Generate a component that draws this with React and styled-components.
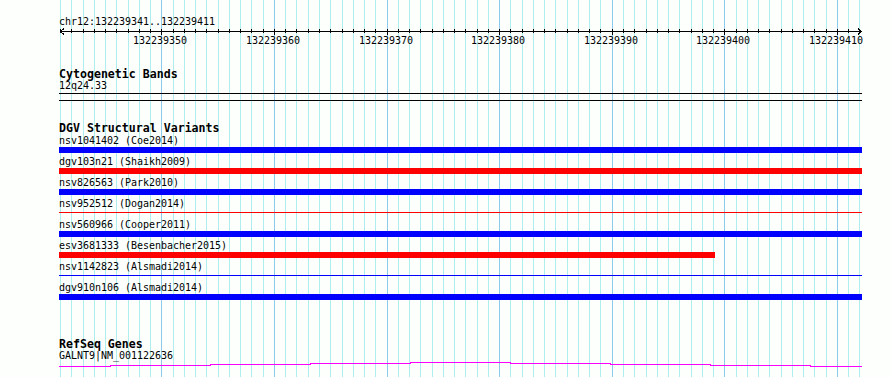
import React from 'react';
import styled, { createGlobalStyle } from 'styled-components';

const START = 132239341;
const END = 132239412;
const LEFT = 59;
const PX_PER_BASE = 11.26;

// x of a base on the page
const baseX = (base) => Math.round(60 + (base - START) * PX_PER_BASE);

const variants = [
  { id: 'nsv1041402', study: 'Coe2014', color: '#0000ff' },
  { id: 'dgv103n21', study: 'Shaikh2009', color: '#ff0000' },
  { id: 'nsv826563', study: 'Park2010', color: '#0000ff' },
  { id: 'nsv952512', study: 'Dogan2014', color: '#ff0000', thin: true },
  { id: 'nsv560966', study: 'Cooper2011', color: '#0000ff' },
  { id: 'esv3681333', study: 'Besenbacher2015', color: '#ff0000', end: 715 },
  { id: 'nsv1142823', study: 'Alsmadi2014', color: '#0000ff', thin: true },
  { id: 'dgv910n106', study: 'Alsmadi2014', color: '#0000ff' },
];

// gene model drawn as a shallow arc, stepping 1px every 100px
const geneSteps = [
  [59, 110, 366], [110, 210, 365], [210, 310, 364], [310, 410, 363], [410, 510, 362],
  [510, 610, 363], [610, 710, 364], [710, 810, 365], [810, 862, 366],
];

const bases = [];
for (let b = START; b <= END; b++) bases.push(b);
const majors = bases.filter((b) => b % 10 === 0);

function App() {
  return (
    <>
      <GlobalStyle />
      <Canvas>
        <GridLayer width="890" height="377">
          {bases.map((b) => (
            <line
              key={b}
              x1={baseX(b) + 0.5}
              x2={baseX(b) + 0.5}
              y1="0"
              y2="377"
              stroke={b % 10 === 0 ? '#8ccbec' : '#aeeeee'}
              strokeWidth="1"
            />
          ))}
        </GridLayer>

        <Tracks>
          <Label>chr12:132239341..132239411</Label>
          <RulerSvg width="803" height="7" shapeRendering="crispEdges">
            <line x1="1" x2="803" y1="3.5" y2="3.5" stroke="#000" />
            {bases.slice(0, 72).map((b) => {
              const x = baseX(b) - LEFT + 0.5;
              return <line key={b} x1={x} x2={x} y1="1" y2={b % 10 === 0 ? 7 : 5} stroke="#000" />;
            })}
            <polyline points="5,0.5 1.5,3.5 5,6.5" fill="none" stroke="#000" />
            <polyline points="799,0.5 802.5,3.5 799,6.5" fill="none" stroke="#000" />
          </RulerSvg>
          <TickRow>
            {majors.map((b) => (
              <TickLabel key={b} style={{ left: baseX(b) - LEFT - 28 }}>{b}</TickLabel>
            ))}
          </TickRow>

          <Track $gap={21}>
            <Title>Cytogenetic Bands</Title>
            <Label>12q24.33</Label>
            <BandBox />
          </Track>

          <Track $gap={21}>
            <Title $tight>DGV Structural Variants</Title>
            {variants.map((v) => (
              <VariantRow key={v.id}>
                <Label $pad>{v.id} ({v.study})</Label>
                <Lane>
                  <Bar
                    $color={v.color}
                    $thin={v.thin}
                    style={v.end ? { width: v.end - LEFT } : undefined}
                  />
                </Lane>
              </VariantRow>
            ))}
          </Track>

          <Track $gap={38}>
            <Title>RefSeq Genes</Title>
            <Label>GALNT9|NM_001122636</Label>
            <GeneSvg width="803" height="9" shapeRendering="crispEdges">
              <path
                d={geneSteps
                  .map(([x1, x2, y], i) => `${i === 0 ? 'M' : 'L'}${x1 - LEFT} ${y - 359 + 0.5} H${x2 - LEFT}`)
                  .join(' ')}
                fill="none"
                stroke="#ff00ff"
                strokeWidth="1"
              />
            </GeneSvg>
          </Track>
        </Tracks>
      </Canvas>
    </>
  );
}

export default App;

const GlobalStyle = createGlobalStyle`
  html, body {
    margin: 0;
    padding: 0;
    background: #fdfffd;
  }
`;

const Canvas = styled.div`
  position: relative;
  width: 890px;
  height: 377px;
  overflow: hidden;
  background: #fdfffd;
  font-family: "DejaVu Sans Mono", "Liberation Mono", monospace;
  color: #000;
`;

const GridLayer = styled.svg`
  position: absolute;
  left: 0;
  top: 0;
  display: block;
`;

const Tracks = styled.div`
  position: relative;
  display: flex;
  flex-direction: column;
  width: 803px;
  padding: 16px 0 0 ${LEFT}px;
`;

const Label = styled.div`
  font-size: 10px;
  letter-spacing: -0.02px;
  line-height: 12px;
  height: 12px;
  padding-top: ${(p) => (p.$pad ? '3px' : '0')};
  white-space: pre;
`;

const Title = styled.div`
  font-size: 11.6px;
  font-weight: bold;
  line-height: 12px;
  height: 12px;
  margin-bottom: ${(p) => (p.$tight ? '-2px' : '0')};
  white-space: pre;
`;

const RulerSvg = styled.svg`
  display: block;
  overflow: visible;
`;

const TickRow = styled.div`
  position: relative;
  height: 12px;
`;

const TickLabel = styled.span`
  position: absolute;
  top: 0;
  font-size: 10px;
  letter-spacing: -0.02px;
  line-height: 12px;
  white-space: pre;
`;

const Track = styled.section`
  display: flex;
  flex-direction: column;
  margin-top: ${(p) => p.$gap}px;
`;

const BandBox = styled.div`
  margin-top: 1px;
  height: 6px;
  border-top: 1px solid #000;
  border-bottom: 1px solid #000;
`;

const VariantRow = styled.div`
  display: flex;
  flex-direction: column;
  height: 21px;
`;

const Lane = styled.div`
  height: 6px;
`;

const Bar = styled.div`
  width: 100%;
  height: ${(p) => (p.$thin ? '1px' : '6px')};
  margin-top: ${(p) => (p.$thin ? '2px' : '0')};
  background: ${(p) => p.$color};
`;

const GeneSvg = styled.svg`
  display: block;
  margin-top: -3px;
  overflow: visible;
`;
